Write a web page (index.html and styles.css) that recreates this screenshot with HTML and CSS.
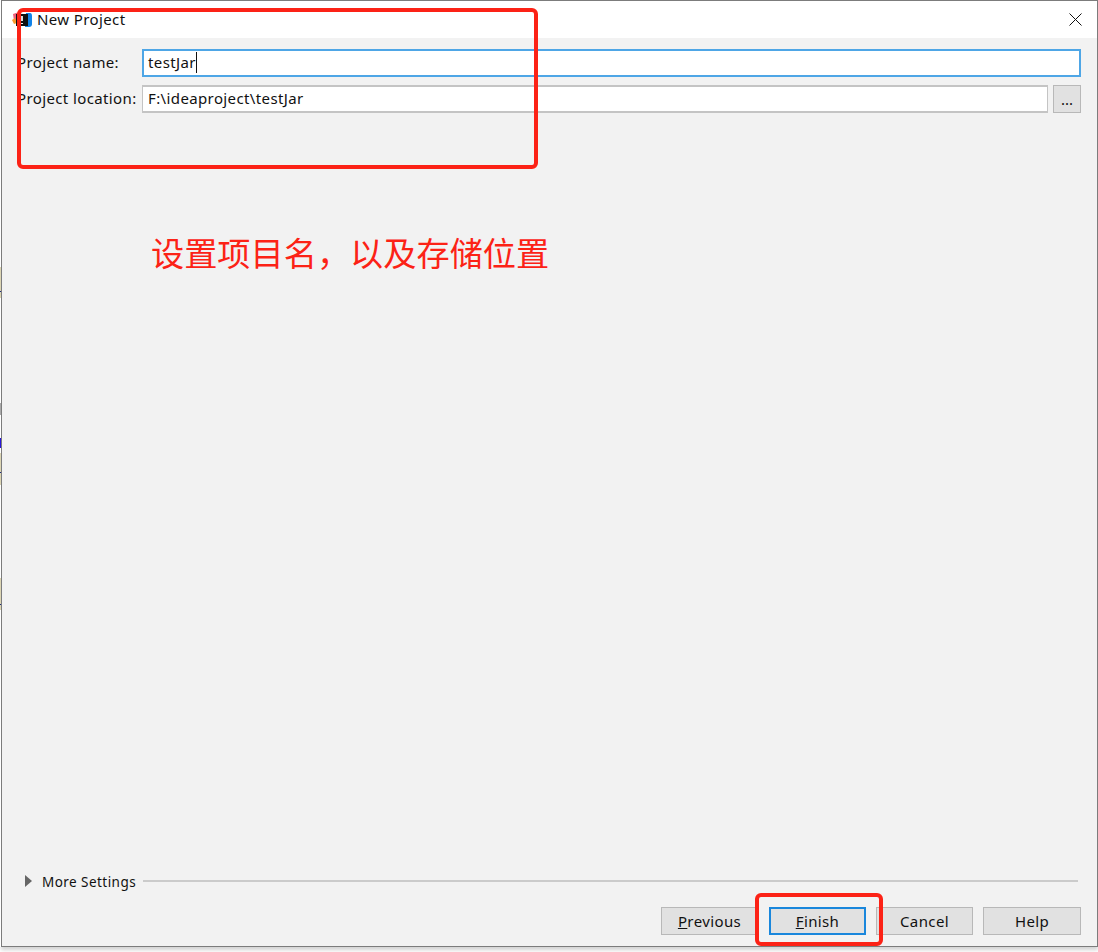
FILE: index.html
```html
<!DOCTYPE html>
<html lang="en">
<head>
<meta charset="utf-8">
<title>New Project</title>
<link rel="stylesheet" href="styles.css">
</head>
<body>
<div class="edge"></div>
<div class="window">
  <header class="titlebar">
    <svg class="app-icon" viewBox="0 0 20 16" width="20" height="16">
      <path d="M1 2 L7 0 L10 3 L7 9 L2 9 Z" fill="#f0607a"/>
      <path d="M0 8 L3 6 L5 11 L2 12 Z" fill="#f99a2b"/>
      <path d="M14 1 H18 Q20 1 20 4 V12 Q20 15 17 15 L13 15 Z" fill="#1183e8"/>
      <rect x="4" y="2" width="12" height="12" fill="#111"/>
      <rect x="6" y="11" width="5" height="1" fill="#eee"/>
      <rect x="6" y="4" width="1" height="5" fill="#ddd"/>
      <rect x="9" y="4" width="2" height="5" fill="#ddd"/>
    </svg>
    <span class="title">New Project</span>
    <svg class="close" viewBox="0 0 13 13" width="13" height="13"><path d="M0.5 0.5 L12.5 12.5 M12.5 0.5 L0.5 12.5" stroke="#111" stroke-width="1" fill="none"/></svg>
  </header>
  <main class="content">
    <div class="form">
      <div class="row">
        <label class="label">Project name:</label>
        <div class="input focused">testJar<span class="caret"></span></div>
      </div>
      <div class="row">
        <label class="label">Project location:</label>
        <div class="input">F:\ideaproject\testJar</div>
        <button class="browse">...</button>
      </div>
    </div>
    <div class="spacer"></div>
    <div class="more">
      <span class="triangle"></span>
      <span class="more-label">More Settings</span>
      <span class="rule"></span>
    </div>
    <div class="actions">
      <button class="btn"><u>P</u>revious</button>
      <button class="btn primary"><u>F</u>inish</button>
      <button class="btn">Cancel</button>
      <button class="btn wide">Help</button>
    </div>
  </main>
</div>
<div class="mark mark-form"></div>
<div class="mark mark-finish"></div>
<div class="note">设置项目名，以及存储位置</div>
</body>
</html>
```
FILE: styles.css
```css
* { box-sizing: border-box; }
html, body { margin: 0; height: 100%; }
body {
  position: relative;
  width: 1098px;
  height: 952px;
  overflow: hidden;
  background: #fff;
  font-family: "Noto Sans", "Open Sans", "Liberation Sans", sans-serif;
  font-size: 15px;
  letter-spacing: .38px;
  color: #111;
}
.edge {
  position: absolute;
  left: 0;
  top: 0;
  width: 1px;
  height: 947px;
  background: linear-gradient(to bottom,
    #fff 267px, #ddd6b4 267px, #ddd6b4 291px, #1c2a80 291px, #1c2a80 292px, #ddd6b4 292px, #ddd6b4 298px, #fff 298px,
    #fff 403px, #aaa 403px, #aaa 415px, #fff 415px,
    #fff 438px, #2a16d8 438px, #2a16d8 448px, #fff 448px,
    #fff 453px, #ddd6b4 453px, #ddd6b4 472px, #1c2a80 472px, #1c2a80 473px, #ddd6b4 473px, #ddd6b4 485px, #fff 485px,
    #fff 578px, #ddd6b4 578px, #ddd6b4 604px, #1c2a80 604px, #1c2a80 605px, #ddd6b4 605px, #ddd6b4 610px, #fff 610px);
}
.window {
  width: 1097px;
  height: 947px;
  margin-left: 1px;
  border: 1px solid #7c7c7c;
  display: flex;
  flex-direction: column;
  background: #f2f2f2;
  box-shadow: 0 3px 4px rgba(0,0,0,.18);
}
.titlebar {
  height: 37px;
  flex: none;
  background: #fff;
  display: flex;
  align-items: center;
  padding: 0 15px 0 10px;
}
.app-icon { flex: none; margin-right: 5px; }
.title { flex: 1; line-height: 20px; margin-top: -2px; }
.close { flex: none; }
.content {
  flex: 1;
  display: flex;
  flex-direction: column;
  padding: 11px 16px 11px 15px;
}
.form { display: flex; flex-direction: column; gap: 8px; }
.row { display: flex; align-items: stretch; height: 28px; }
.label { width: 125px; flex: none; line-height: 26px; }
.input {
  flex: 1;
  background: #fff;
  border: 1px solid #c4c4c4;
  border-width: 2px 1px 2px 1px;
  padding: 0 0 2px 5px;
  line-height: 22px;
  display: flex;
  align-items: center;
}
.input.focused { border: 2px solid #4ea6e6; padding-left: 4px; }
.caret { width: 1px; height: 21px; background: #111; margin-left: 0; }
.browse {
  width: 28px;
  flex: none;
  margin-left: 5px;
  background: #e1e1e1;
  border: 1px solid #b8b8b8;
  font: inherit;
  letter-spacing: normal;
  color: #111;
  padding: 0;
  line-height: 22px;
}
.spacer { flex: 1; }
.more { display: flex; align-items: center; height: 16px; margin-bottom: 18px; padding-left: 8px; padding-right: 3px; }
.triangle {
  width: 0; height: 0;
  border-left: 7px solid #666;
  border-top: 6px solid transparent;
  border-bottom: 6px solid transparent;
  margin-right: 10px;
}
.more-label { font-size: 13.5px; letter-spacing: .45px; line-height: 16px; margin-right: 7px; padding-top: 2px; }
.rule { flex: 1; height: 2px; background: #cbcbcb; }
.actions { display: flex; justify-content: flex-end; gap: 10px; }
.btn {
  width: 97px;
  height: 28px;
  background: #e1e1e1;
  border: 1px solid #b8b8b8;
  font: inherit;
  letter-spacing: .38px;
  color: #111;
  padding: 0;
}
.btn.wide { width: 98px; }
.btn.primary { border: 2px solid #1a87dc; margin-left: 1px; }
.mark {
  position: absolute;
  border: 4px solid #fc2216;
  border-radius: 6px;
}
.mark-form { left: 17px; top: 8px; width: 521px; height: 161px; }
.mark-finish { left: 755px; top: 893px; width: 128px; height: 53px; }
.note {
  position: absolute;
  left: 151px;
  top: 228px;
  font-family: "Noto Sans CJK SC", sans-serif;
  font-size: 33.2px;
  line-height: 48px;
  letter-spacing: 0;
  color: #fc2216;
  white-space: nowrap;
}
```
